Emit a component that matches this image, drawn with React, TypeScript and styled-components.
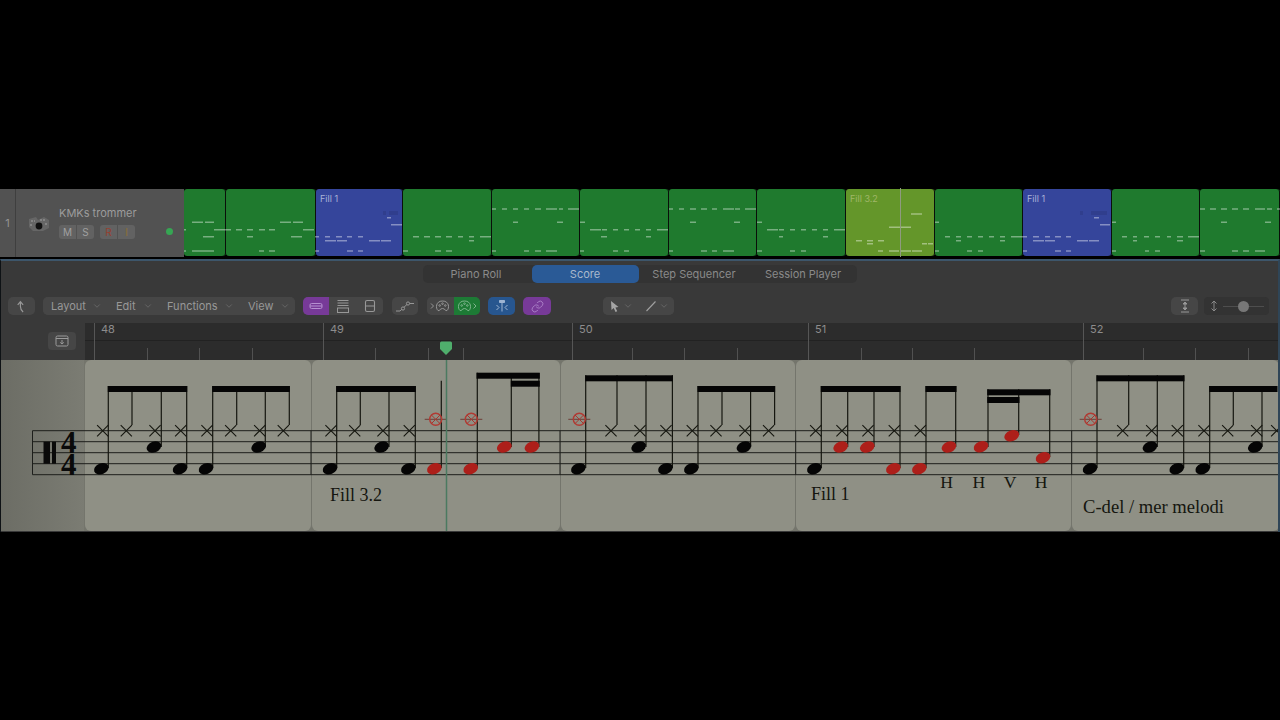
/*
@description: Logic style track strip and score editor
*/

import styled, { createGlobalStyle } from "styled-components";
import { ChevronDown, Link } from "lucide-react";

const GlobalStyle = createGlobalStyle`
    html, body {
        margin: 0;
        background: #000;
    }
    body {
        font-family: Inter, "Liberation Sans", sans-serif;
    }
`;

const Screen = styled.div`
    width: 1280px;
    height: 720px;
    padding-top: 188px;
    box-sizing: border-box;
    display: flex;
    flex-direction: column;
    overflow: hidden;
    background: #000;
`;

const TrackRow = styled.div`
    display: flex;
    height: 69px;
    flex: none;
`;

const TrackHeader = styled.div`
    width: 184px;
    flex: none;
    display: flex;
    align-items: center;
    background: #525252;
    margin-top: 1px;
`;

const TrackNumber = styled.div`
    width: 16px;
    height: 100%;
    box-sizing: border-box;
    border-right: 1px solid #3f3f3f;
    color: #949494;
    font-size: 11px;
    display: flex;
    align-items: center;
    justify-content: center;
`;

const TrackIcon = styled.svg`
    width: 24px;
    height: 20px;
    margin-left: 11px;
    flex: none;
`;

const TrackInfo = styled.div`
    margin-left: 8px;
    display: flex;
    flex-direction: column;
    gap: 5px;
    padding-bottom: 2px;
`;

const TrackName = styled.div`
    color: #9c9c9c;
    font-size: 11px;
    line-height: 14px;
    white-space: nowrap;
`;

const TrackButtons = styled.div`
    display: flex;
    gap: 6px;
`;

const TrackButtonGroup = styled.div`
    display: flex;
    gap: 1px;
    border-radius: 3px;
    overflow: hidden;
`;

const TrackButton = styled.div<{ $color?: string }>`
    width: 17px;
    height: 14px;
    background: #626262;
    color: ${(p) => p.$color || "#a0a0a0"};
    font-size: 10px;
    display: flex;
    align-items: center;
    justify-content: center;
`;

const ActivityDot = styled.div`
    width: 7px;
    height: 7px;
    border-radius: 50%;
    background: #36a653;
    margin-left: auto;
    margin-right: 11px;
    margin-top: 16px;
`;

const RegionStrip = styled.div`
    flex: 1;
    display: flex;
    position: relative;
    padding: 1px 0;
    box-sizing: border-box;
`;

const tones: any = {
    green: "#1f7a2e",
    blue: "#35459b",
    olive: "#64962a",
};

const Region = styled.div<{ $width: number; $tone: string }>`
    width: ${(p) => p.$width}px;
    flex: none;
    position: relative;
    box-sizing: border-box;
    background: ${(p) => tones[p.$tone]};
    box-shadow: inset -1px 0 0 #0a0f0a;
    border-radius: 3px;
    overflow: hidden;
`;

const RegionLabel = styled.div<{ $tone: string }>`
    position: relative;
    padding: 4px 0 0 4px;
    font-size: 9px;
    line-height: 11px;
    color: ${(p) => (p.$tone === "olive" ? "#a0b768" : "#aab2d8")};
`;

const RegionNotes = styled.svg`
    position: absolute;
    top: 0;
    left: 0;
    height: 67px;
`;

const StripPlayLine = styled.div`
    position: absolute;
    top: 0;
    bottom: 0;
    left: 716px;
    width: 1px;
    background: #8f9a80;
`;

const Editor = styled.div`
    margin-top: 2px;
    height: 273px;
    flex: none;
    display: flex;
    flex-direction: column;
    box-sizing: border-box;
    border-top: 2px solid #3d566b;
    border-right: 2px solid #2f4557;
    border-left: 1px solid #0e1215;
    background: #393939;
`;

const TabBar = styled.div`
    height: 28px;
    flex: none;
    box-sizing: border-box;
    padding-top: 4px;
    display: flex;
    justify-content: center;
`;

const Tabs = styled.div`
    display: grid;
    grid-template-columns: repeat(4, 107px);
    column-gap: 2px;
    height: 18px;
    background: #333;
    border-radius: 5px;
`;

const Tab = styled.div<{ $active?: boolean }>`
    display: flex;
    align-items: center;
    justify-content: center;
    border-radius: 5px;
    padding-bottom: 1px;
    box-sizing: border-box;
    font-size: 11px;
    color: ${(p) => (p.$active ? "#a9b8cc" : "#8a8a8a")};
    background: ${(p) => (p.$active ? "#2a5a96" : "transparent")};
`;

const Toolbar = styled.div`
    height: 34px;
    flex: none;
    box-sizing: border-box;
    padding: 0 9px 0 7px;
    display: flex;
    align-items: center;
    gap: 8px;
`;

const ToolGroup = styled.div<{ $push?: string }>`
    display: flex;
    height: 18px;
    border-radius: 5px;
    overflow: hidden;
    background: #464646;
    gap: 1px;
    margin-left: ${(p) => p.$push || "0"};
`;

const ToolButton = styled.div<{ $width?: number; $bg?: string; $ink?: string }>`
    width: ${(p) => p.$width || 27}px;
    height: 18px;
    flex: none;
    display: flex;
    align-items: center;
    justify-content: center;
    background: ${(p) => p.$bg || "#464646"};
    color: ${(p) => p.$ink || "#979797"};
`;

const MenuItem = styled.div<{ $width: number }>`
    width: ${(p) => p.$width}px;
    height: 18px;
    box-sizing: border-box;
    padding: 0 5px 0 8px;
    display: flex;
    align-items: center;
    justify-content: space-between;
    background: #464646;
    color: #989898;
    font-size: 11px;
`;

const ZoomSlider = styled.div`
    width: 65px;
    height: 18px;
    box-sizing: border-box;
    padding: 0 5px 0 6px;
    display: flex;
    align-items: center;
    gap: 5px;
    background: #333;
    border-radius: 4px;
    margin-left: -2px;
`;

const SliderTrack = styled.div`
    flex: 1;
    height: 1px;
    background: #4e4e4e;
    position: relative;
`;

const SliderThumb = styled.div`
    position: absolute;
    left: 15px;
    top: -5px;
    width: 11px;
    height: 11px;
    border-radius: 50%;
    background: #777;
`;

const RulerRow = styled.div`
    height: 37px;
    flex: none;
    display: flex;
`;

const RulerCorner = styled.div`
    width: 84px;
    flex: none;
    box-sizing: border-box;
    padding: 9px 0 0 47px;
`;

const RulerButton = styled.div`
    width: 28px;
    height: 18px;
    border-radius: 4px;
    background: #464646;
    display: flex;
    align-items: center;
    justify-content: center;
`;

const RulerTrack = styled.div`
    flex: 1;
    position: relative;
    background: #2c2c2c;
    overflow: hidden;
`;

const RulerDivider = styled.div`
    height: 17px;
    border-bottom: 1px solid #222;
`;

const BarMark = styled.div<{ $x: number }>`
    position: absolute;
    top: 0;
    bottom: 0;
    left: ${(p) => p.$x - 85}px;
    border-left: 1px solid #565656;
    padding: 0 0 0 6px;
    color: #8c8c8c;
    font-size: 11px;
    line-height: 13px;
`;

const BeatTick = styled.div<{ $x: number }>`
    position: absolute;
    bottom: 0;
    height: 12px;
    left: ${(p) => p.$x - 85}px;
    width: 1px;
    background: #515151;
`;

const PlayheadFlag = styled.svg`
    position: absolute;
    left: 353px;
    top: 18px;
    width: 16px;
    height: 16px;
`;

const ScoreArea = styled.div`
    height: 171px;
    flex: none;
    display: flex;
    gap: 1px;
    position: relative;
    overflow: hidden;
    background: #74756c;
`;

const ClefColumn = styled.div`
    width: 83px;
    flex: none;
    background: linear-gradient(90deg, #6c6d65, #7b7c73);
`;

const MeasureCard = styled.div<{ $width: number }>`
    width: ${(p) => p.$width}px;
    flex: none;
    background: #8f9085;
    border-radius: 6px;
`;

const ScoreCanvas = styled.svg`
    position: absolute;
    top: 0;
    left: -1px;
    width: 1280px;
    height: 171px;
`;

const regions = [
    { width: 42, tone: "green" },
    { width: 90, tone: "green" },
    { width: 87, tone: "blue", label: "Fill 1" },
    { width: 89, tone: "green" },
    { width: 88, tone: "green" },
    { width: 89, tone: "green" },
    { width: 88, tone: "green" },
    { width: 89, tone: "green" },
    { width: 89, tone: "olive", label: "Fill 3.2" },
    { width: 88, tone: "green" },
    { width: 89, tone: "blue", label: "Fill 1" },
    { width: 88, tone: "green" },
    { width: 80, tone: "green" },
];

//midi dashes, page coords: [y, x1, x2, x1, x2, ...]
const midiRows = [
    [222.3, 192, 203, 205, 214, 280, 291, 293, 303, 513, 518, 557, 563, 580, 585, 690, 696, 734, 740, 757, 762, 935, 939, 1112, 1116, 1221, 1227, 1265, 1271],
    [229.7, 184, 186, 214, 231, 236, 242, 247, 253, 259, 265, 269, 275, 303, 314, 590, 601, 602, 607, 613, 618, 624, 629, 635, 640, 646, 651, 657, 668, 767, 778, 779, 784, 790, 795, 801, 806, 812, 817, 823, 828, 834, 845],
    [236.7, 203, 214, 247, 253, 291, 302, 315, 319, 325, 330, 336, 342, 347, 352, 358, 363, 413, 419, 424, 430, 435, 441, 446, 452, 458, 463, 469, 474, 480, 491, 601, 607, 646, 651, 779, 783, 823, 828, 945, 950, 956, 961, 967, 972, 978, 983, 989, 994, 1000, 1005, 1011, 1027, 1033, 1039, 1045, 1050, 1055, 1061, 1066, 1071, 1122, 1127, 1133, 1137, 1144, 1149, 1155, 1160, 1167, 1171, 1177, 1183, 1188, 1199],
    [240.7, 325, 336, 337, 347, 369, 380, 381, 391, 469, 474, 856, 862, 867, 873, 878, 884, 956, 961, 1000, 1005, 1033, 1044, 1045, 1055, 1077, 1088, 1089, 1099, 1133, 1137, 1177, 1183],
    [251, 184, 186, 192, 214, 259, 264, 269, 275, 315, 319, 347, 353, 358, 363, 403, 408, 435, 441, 446, 452, 492, 496, 524, 529, 535, 541, 546, 557, 580, 584, 613, 618, 624, 629, 669, 673, 701, 707, 712, 717, 723, 734, 757, 762, 790, 795, 801, 806, 878, 883, 889, 899, 901, 911, 912, 922, 935, 939, 967, 972, 978, 983, 1023, 1027, 1055, 1061, 1066, 1071, 1112, 1116, 1145, 1149, 1155, 1160, 1200, 1205, 1232, 1238, 1243, 1249, 1255, 1265],
    [209, 492, 496, 502, 507, 513, 518, 524, 529, 535, 541, 546, 557, 559, 563, 568, 579, 669, 673, 679, 684, 690, 696, 701, 707, 712, 717, 723, 734, 735, 740, 745, 756, 1200, 1205, 1210, 1216, 1221, 1227, 1232, 1238, 1243, 1249, 1255, 1265, 1267, 1272, 1277, 1280],
    [217.7, 387, 391, 1094, 1099],
    [224.7, 391, 402, 1100, 1110],
    [214, 911, 922],
    [227.3, 889, 900, 901, 911],
    [243.7, 867, 873, 922, 927, 928, 933],
];

const ghostRows = [[213, 383, 386, 389, 398, 1080, 1083, 1091, 1107]];

const staffY = [430.7, 441.7, 452.7, 463.7, 474.7];
const barLines = [311, 560, 795.7, 1071.7];

const beams = [
    [108.3, 186.7, 386],
    [212.7, 289.3, 386],
    [336.7, 415.3, 386],
    [477, 539.3, 372.7],
    [511.3, 539.3, 380.7],
    [585.7, 672.4, 375.3],
    [698, 774.6, 386],
    [821.3, 900, 386],
    [926, 956, 386],
    [987.7, 1050, 389.3],
    [987.7, 1019, 397],
    [1097, 1184, 375.3],
    [1209.7, 1277, 386],
];

const stems = [
    [108.3, 386, 468], [132, 386, 425], [161.3, 386, 447], [186.7, 386, 468],
    [212.7, 386, 468], [236.7, 386, 425], [265.3, 386, 447], [289.3, 386, 425],
    [336.7, 386, 468], [360.3, 386, 425], [389, 386, 447], [415.3, 386, 468],
    [441.3, 380.7, 468], [477.3, 372.7, 468], [511.3, 373, 447], [538.9, 373, 447],
    [585.7, 375.3, 468], [617, 375.3, 425], [646, 375.3, 447], [672.4, 375.3, 468],
    [698, 386, 468], [722, 386, 425], [750.6, 386, 447], [774.6, 386, 425],
    [821.3, 386, 468], [847.7, 386, 447], [874, 386, 447], [900, 386, 468],
    [926, 386, 468], [955.7, 386, 447], [988, 389.3, 447], [1018.7, 389.3, 435],
    [1049.7, 389.3, 457],
    [1097, 375.3, 468], [1128.7, 375.3, 425], [1157.3, 375.3, 447], [1183.7, 375.3, 468],
    [1209.7, 386, 468], [1233.3, 386, 425], [1262, 386, 447],
];

const crosses = [
    102.7, 126.3, 155, 180.7, 207, 230.7, 259.7, 283.3,
    331, 354.7, 383, 409.3,
    611, 640, 666, 692.3, 716, 745, 768.6,
    815.7, 842, 868, 894.3, 920.3,
    1122.7, 1151.7, 1177.3, 1204, 1227.7, 1256.7, 1276.7,
];

const blackHeads = [
    [101.3, 468.7], [180, 468.7], [206, 468.7], [154, 447], [258.7, 447],
    [330, 468.7], [408.3, 468.7], [381.7, 447],
    [578.3, 468.7], [665.4, 468.7], [691.3, 468.7], [638.7, 447], [744, 447],
    [814.3, 468.7],
    [1090, 468.7], [1176.7, 468.7], [1202.7, 468.7], [1150, 447], [1255.3, 447],
];

const redHeads = [
    [434.3, 468.7], [470.7, 468.7], [504.3, 447], [532, 447],
    [840.7, 447], [867.3, 447], [893.3, 468.7], [919.3, 468.7], [949, 447],
    [981, 446.7], [1011.7, 435.7], [1043, 457.7],
];

const ghostNotes = [435.7, 471.3, 579.3, 1090.7];

const labels = [
    { x: 330, y: 500.5, size: 18, text: "Fill 3.2" },
    { x: 811, y: 500, size: 18, text: "Fill 1" },
    { x: 940.3, y: 488, size: 17.6, text: "H" },
    { x: 972.6, y: 488, size: 17.6, text: "H" },
    { x: 1003.7, y: 488, size: 17.6, text: "V" },
    { x: 1034.8, y: 488, size: 17.6, text: "H" },
    { x: 1083, y: 512.5, size: 18.6, text: "C-del / mer melodi" },
];

const bars = [
    { x: 94, n: "48" },
    { x: 323, n: "49" },
    { x: 572, n: "50" },
    { x: 808, n: "51" },
    { x: 1083, n: "52" },
];

const beatTicks = [147, 199, 252, 375, 428, 463, 632, 684, 737, 861, 912, 974, 1143, 1195, 1248];

const Chevron = () => <ChevronDown size={10} strokeWidth={1.8} color="#707070" />;

//region notes drawn in page coords, the viewBox shows this region's slice
const RegionDashes = ({ start, width }: any) => (
    <RegionNotes width={width} viewBox={`${start} 189 ${width} 67`}>
        {midiRows.map((row) =>
            row.slice(1).map((_, i) =>
                i % 2 === 0 ? (
                    <line
                        key={`${row[0]}-${i}`}
                        x1={row[i + 1]}
                        x2={row[i + 2]}
                        y1={row[0]}
                        y2={row[0]}
                        stroke="rgba(255,255,255,0.4)"
                        strokeWidth={1.6}
                    />
                ) : null
            )
        )}
        {ghostRows.map((row) =>
            row.slice(1).map((_, i) =>
                i % 2 === 0 ? (
                    <line
                        key={`g${i}`}
                        x1={row[i + 1]}
                        x2={row[i + 2]}
                        y1={row[0]}
                        y2={row[0]}
                        stroke="rgba(0,0,0,0.09)"
                        strokeWidth={4}
                    />
                ) : null
            )
        )}
    </RegionNotes>
);

const ScoreDrawing = () => (
    <ScoreCanvas viewBox="0 360 1280 171">
        {staffY.map((y) => (
            <line key={y} x1={32.5} x2={1280} y1={y} y2={y} stroke="#1d1e1b" strokeWidth={1} />
        ))}
        <line x1={32.5} x2={32.5} y1={430.7} y2={474.7} stroke="#1d1e1b" />
        {barLines.map((x) => (
            <line key={x} x1={x} x2={x} y1={430.7} y2={474.7} stroke="#1d1e1b" />
        ))}
        <rect x={43.5} y={441.7} width={6.5} height={22} fill="#0a0a0a" />
        <rect x={52} y={441.7} width={4} height={22} fill="#0a0a0a" />
        <text x={61} y={452.5} fontFamily="Liberation Serif" fontWeight="bold" fontSize={31} fill="#0a0a0a">4</text>
        <text x={61} y={474.5} fontFamily="Liberation Serif" fontWeight="bold" fontSize={31} fill="#0a0a0a">4</text>
        {stems.map(([x, y1, y2]) => (
            <line key={`${x}-${y1}`} x1={x} x2={x} y1={y1} y2={y2} stroke="#15160f" strokeWidth={1.2} />
        ))}
        {beams.map(([x1, x2, y]) => (
            <rect key={`${x1}-${y}`} x={x1 - 0.5} y={y} width={x2 - x1 + 1} height={6} fill="#050505" />
        ))}
        {crosses.map((x) => (
            <path
                key={x}
                d={`M${x - 5.6} 425.1 L${x + 5.6} 436.3 M${x + 5.6} 425.1 L${x - 5.6} 436.3`}
                stroke="#15160f"
                strokeWidth={1.1}
            />
        ))}
        {blackHeads.map(([x, y]) => (
            <ellipse key={`${x}-${y}`} cx={x} cy={y} rx={7.6} ry={5.4} fill="#050505" transform={`rotate(-22 ${x} ${y})`} />
        ))}
        {redHeads.map(([x, y]) => (
            <ellipse key={`${x}-${y}`} cx={x} cy={y} rx={7.6} ry={5.4} fill="#ad1f1a" transform={`rotate(-22 ${x} ${y})`} />
        ))}
        {ghostNotes.map((x) => (
            <g key={x} fill="none">
                <line x1={x - 11} x2={x + 11} y1={419.3} y2={419.3} stroke="#6d3c36" strokeWidth={1} />
                <circle cx={x} cy={419.3} r={6} stroke="#b23a33" strokeWidth={1.4} />
                <path d={`M${x - 4.3} 415 L${x + 4.3} 423.6 M${x + 4.3} 415 L${x - 4.3} 423.6`} stroke="#a8362f" strokeWidth={1} />
            </g>
        ))}
        {labels.map((l) => (
            <text key={`${l.x}`} x={l.x} y={l.y} fontFamily="Liberation Serif" fontSize={l.size} fill="#15160f">
                {l.text}
            </text>
        ))}
        <line x1={446.5} x2={446.5} y1={360} y2={531} stroke="#4b7a60" strokeWidth={1.5} />
    </ScoreCanvas>
);

const MidiInIcon = ({ out }: any) => (
    <svg width="22" height="14" viewBox="0 0 22 14" fill="none" stroke="currentColor" strokeWidth="1">
        {out ? (
            <path d="M17.5 4.5 L20 7 L17.5 9.5" />
        ) : (
            <path d="M2 4.5 L4.5 7 L2 9.5" />
        )}
        <g transform={out ? "translate(1 0)" : "translate(6 0)"}>
            <path d="M3 11.5 C0.5 9.5 0.5 2 7.5 2 C14.5 2 14.5 9.5 12 11.5 C10.5 12.5 10 9.5 7.5 9.5 C5 9.5 4.5 12.5 3 11.5 Z" />
            <circle cx="4.7" cy="6.5" r="0.8" />
            <circle cx="7.5" cy="4.7" r="0.8" />
            <circle cx="10.3" cy="6.5" r="0.8" />
        </g>
    </svg>
);

export default () => {
    let regionStart = 184;

    return (
        <Screen>
            <GlobalStyle />
            <TrackRow>
                <TrackHeader>
                    <TrackNumber>1</TrackNumber>
                    <TrackIcon viewBox="0 0 24 20">
                        <path d="M2 6 L9 4 L11 7 L17 4 L22 7 L22 15 L16 18 L6 18 L2 14 Z" fill="#666" />
                        <path d="M4 8 H8 M13 7 H19 M3 12 H6 M18 11 H21" stroke="#8e8e8e" strokeWidth="1.4" strokeDasharray="2 1" />
                        <circle cx="12" cy="13" r="3.4" fill="#111" />
                    </TrackIcon>
                    <TrackInfo>
                        <TrackName>KMKs trommer</TrackName>
                        <TrackButtons>
                            <TrackButtonGroup>
                                <TrackButton>M</TrackButton>
                                <TrackButton>S</TrackButton>
                            </TrackButtonGroup>
                            <TrackButtonGroup>
                                <TrackButton $color="#96402f">R</TrackButton>
                                <TrackButton $color="#8f6f33">I</TrackButton>
                            </TrackButtonGroup>
                        </TrackButtons>
                    </TrackInfo>
                    <ActivityDot />
                </TrackHeader>
                <RegionStrip>
                    {regions.map((r, i) => {
                        const start = regionStart;
                        regionStart += r.width;
                        return (
                            <Region key={i} $width={r.width} $tone={r.tone}>
                                <RegionDashes start={start} width={r.width} />
                                {r.label && <RegionLabel $tone={r.tone}>{r.label}</RegionLabel>}
                            </Region>
                        );
                    })}
                    <StripPlayLine />
                </RegionStrip>
            </TrackRow>

            <Editor>
                <TabBar>
                    <Tabs>
                        <Tab>Piano Roll</Tab>
                        <Tab $active>Score</Tab>
                        <Tab>Step Sequencer</Tab>
                        <Tab>Session Player</Tab>
                    </Tabs>
                </TabBar>

                <Toolbar>
                    <ToolGroup>
                        <ToolButton>
                            <svg width="13" height="13" viewBox="0 0 12 12" fill="none" stroke="currentColor" strokeWidth="1.1">
                                <path d="M2.5 4.5 L5 1.5 L7.5 4.5 M5 1.5 V6 Q5 9 7.5 11" />
                            </svg>
                        </ToolButton>
                    </ToolGroup>
                    <ToolGroup>
                        <MenuItem $width={64}>Layout<Chevron /></MenuItem>
                        <MenuItem $width={50}>Edit<Chevron /></MenuItem>
                        <MenuItem $width={80}>Functions<Chevron /></MenuItem>
                        <MenuItem $width={55}>View<Chevron /></MenuItem>
                    </ToolGroup>
                    <ToolGroup>
                        <ToolButton $width={26} $bg="#773a98" $ink="#b58fd0">
                            <svg width="14" height="10" viewBox="0 0 14 10" fill="none" stroke="currentColor" strokeWidth="1">
                                <rect x="1" y="2.5" width="12" height="5" rx="1.5" />
                                <path d="M1 5 H13" />
                            </svg>
                        </ToolButton>
                        <ToolButton $width={26}>
                            <svg width="14" height="15" viewBox="0 0 14 15" fill="none" stroke="currentColor" strokeWidth="1">
                                <path d="M1.5 1.5 H12.5 M1.5 4 H12.5 M1.5 6.5 H12.5" />
                                <rect x="1.5" y="9" width="11" height="4.5" />
                            </svg>
                        </ToolButton>
                        <ToolButton $width={26}>
                            <svg width="12" height="14" viewBox="0 0 12 14" fill="none" stroke="currentColor" strokeWidth="1.1">
                                <rect x="1.5" y="1.5" width="9" height="11" rx="1.5" />
                                <path d="M1.5 7 H10.5" />
                            </svg>
                        </ToolButton>
                    </ToolGroup>
                    <ToolGroup $push="1px">
                        <ToolButton $width={26}>
                            <svg width="20" height="13" viewBox="0 0 20 12" fill="none" stroke="currentColor" strokeWidth="1">
                                <path d="M1 10.5 H5 L13 3 H19" />
                                <circle cx="8" cy="8" r="1.6" fill="#464646" />
                                <circle cx="13" cy="3" r="1.6" fill="#464646" />
                            </svg>
                        </ToolButton>
                    </ToolGroup>
                    <ToolGroup $push="1px">
                        <ToolButton $width={26}>
                            <MidiInIcon />
                        </ToolButton>
                        <ToolButton $width={26} $bg="#1d7a35" $ink="#7fb58d">
                            <MidiInIcon out />
                        </ToolButton>
                    </ToolGroup>
                    <ToolGroup>
                        <ToolButton $bg="#27568f" $ink="#9db4d2">
                            <svg width="14" height="14" viewBox="0 0 14 14" fill="none" stroke="currentColor" strokeWidth="1">
                                <path d="M4.5 1.5 H9.5 V3.5 H4.5 Z" fill="currentColor" />
                                <path d="M7 3.5 V12.5 M1.5 6 L4 8.5 L1.5 11 M12.5 6 L10 8.5 L12.5 11" />
                            </svg>
                        </ToolButton>
                    </ToolGroup>
                    <ToolGroup>
                        <ToolButton $width={28} $bg="#773a98" $ink="#b58fd0">
                            <Link size={13} strokeWidth={1.5} />
                        </ToolButton>
                    </ToolGroup>
                    <ToolGroup $push="44px">
                        <ToolButton $width={35}>
                            <svg width="12" height="13" viewBox="0 0 12 13" style={{ marginRight: 2 }}>
                                <path d="M2 1 L2.5 10 L4.7 8 L6.5 12 L8.2 11.2 L6.4 7.4 L9.5 7 Z" fill="#a5a5a5" />
                            </svg>
                            <Chevron />
                        </ToolButton>
                        <ToolButton $width={35}>
                            <svg width="12" height="12" viewBox="0 0 12 12" fill="none" stroke="#a0a0a0" strokeWidth="1.1" style={{ marginRight: 2 }}>
                                <path d="M1.5 11 L10.5 1.5" />
                            </svg>
                            <Chevron />
                        </ToolButton>
                    </ToolGroup>
                    <ToolGroup $push="auto">
                        <ToolButton>
                            <svg width="12" height="14" viewBox="0 0 12 14" fill="none" stroke="currentColor" strokeWidth="1">
                                <path d="M2 1 H10 M2 13 H10 M6 3 V11" />
                                <path d="M4 5 L6 3 L8 5 Z M4 9 L6 11 L8 9 Z" fill="currentColor" />
                            </svg>
                        </ToolButton>
                    </ToolGroup>
                    <ZoomSlider>
                        <svg width="8" height="12" viewBox="0 0 8 12" fill="none" stroke="#8a8a8a" strokeWidth="1" style={{ flex: "none" }}>
                            <path d="M1.5 3.5 L4 1 L6.5 3.5 M1.5 8.5 L4 11 L6.5 8.5 M4 1 V11" />
                        </svg>
                        <SliderTrack>
                            <SliderThumb />
                        </SliderTrack>
                    </ZoomSlider>
                </Toolbar>

                <RulerRow>
                    <RulerCorner>
                        <RulerButton>
                            <svg width="14" height="12" viewBox="0 0 14 12" fill="none" stroke="#9a9a9a" strokeWidth="1">
                                <rect x="1" y="1" width="12" height="10" rx="1.5" />
                                <path d="M1 3.5 H13 M7 5 V9 M5.2 7.4 L7 9 L8.8 7.4" />
                            </svg>
                        </RulerButton>
                    </RulerCorner>
                    <RulerTrack>
                        <RulerDivider />
                        {bars.map((b) => (
                            <BarMark key={b.n} $x={b.x}>{b.n}</BarMark>
                        ))}
                        {beatTicks.map((x) => (
                            <BeatTick key={x} $x={x} />
                        ))}
                        <PlayheadFlag viewBox="0 0 16 16">
                            <path d="M2 2 Q2 0.5 3.5 0.5 H12.5 Q14 0.5 14 2 V8 L8 14 L2 8 Z" fill="#4fae6c" />
                        </PlayheadFlag>
                    </RulerTrack>
                </RulerRow>

                <ScoreArea>
                    <ClefColumn />
                    <MeasureCard $width={226} />
                    <MeasureCard $width={248} />
                    <MeasureCard $width={234} />
                    <MeasureCard $width={275} />
                    <MeasureCard $width={207} />
                    <ScoreDrawing />
                </ScoreArea>
            </Editor>
        </Screen>
    );
};
